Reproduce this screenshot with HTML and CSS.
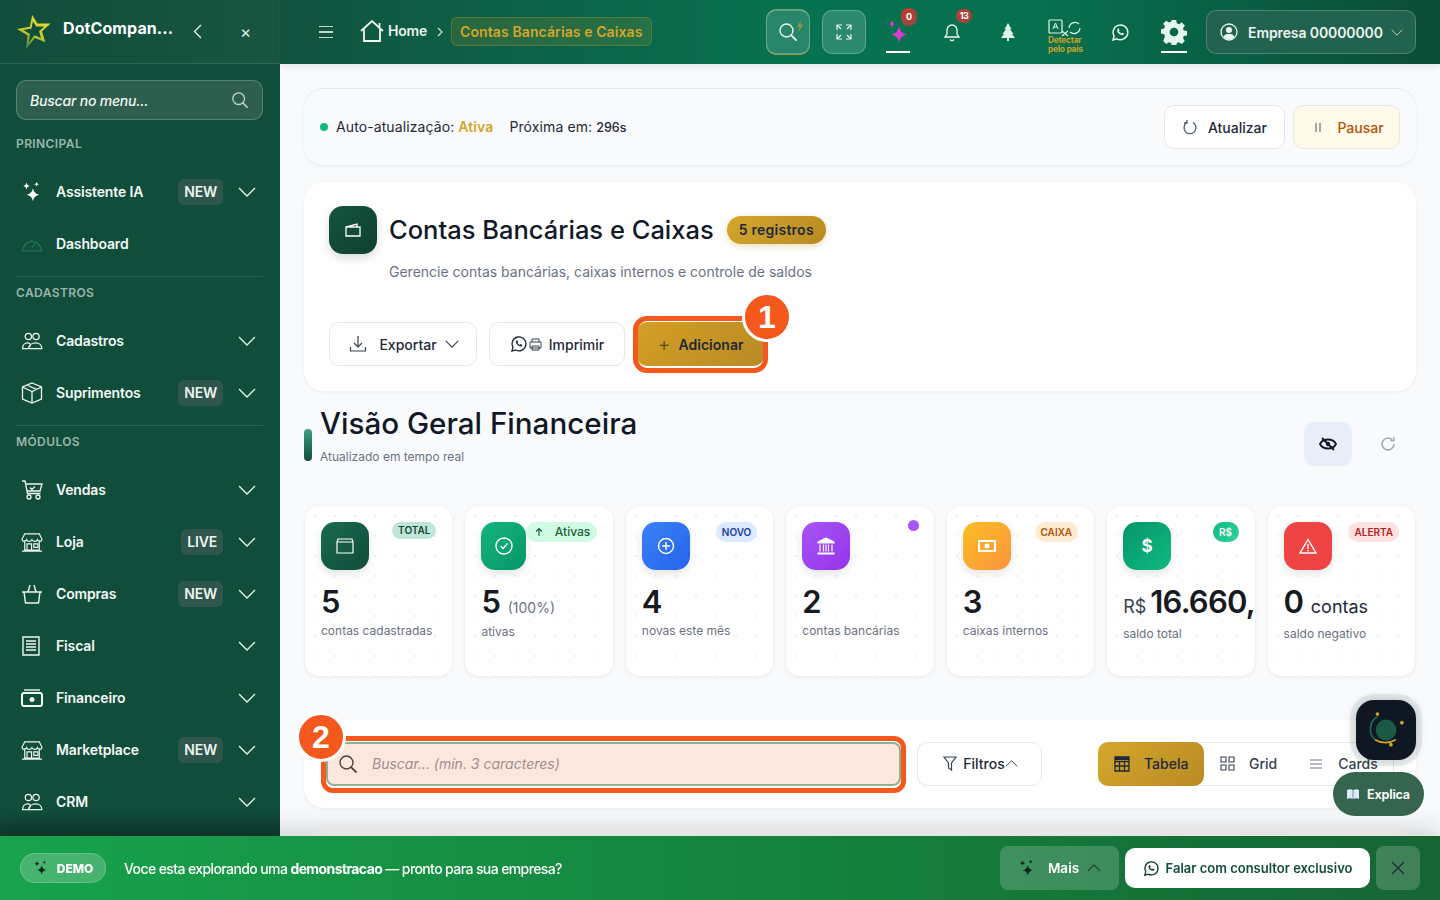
FILE: index.html
```html
<!DOCTYPE html>
<html lang="pt-BR">
<head>
    <meta charset="UTF-8">
    <meta name="viewport" content="width=device-width, initial-scale=1.0">
    <title>Contas Bancárias e Caixas</title>
    <link rel="stylesheet" href="styles.css">
</head>
<body>
    <svg class="sprite" xmlns="http://www.w3.org/2000/svg">
        <symbol id="chev" viewBox="0 0 18 10"><path d="M1 1l8 8 8-8" fill="none" stroke="currentColor" stroke-width="1.4"/></symbol>
        <symbol id="search" viewBox="0 0 20 20"><circle cx="8.5" cy="8.5" r="6.5" fill="none" stroke="currentColor" stroke-width="1.4"/><path d="M13.3 13.3L18 18" stroke="currentColor" stroke-width="1.8" stroke-linecap="round"/></symbol>
        <symbol id="spark" viewBox="0 0 24 24"><path fill="currentColor" d="M13 8q1 6 7 7-6 1-7 7-1-6-7-7 6-1 7-7zM6 2q.5 3 3.500 3.500-3 .5-3.500 3.500-.5-3-3.500-3.500 3-.5 3.500-3.500zM17 1q.3 2 2.500 2.500-2.200.5-2.500 2.500-.3-2-2.500-2.500 2.200-.5 2.500-2.500z"/></symbol>
        <symbol id="people" viewBox="0 0 24 20"><g fill="none" stroke="currentColor" stroke-width="1.400"><circle cx="8" cy="5" r="3.500"/><circle cx="16.500" cy="5" r="3.500"/><path d="M1.500 18.500c0-4 2.500-6.500 5.500-6.500 2 0 3 1 3.500 2l-2.500 4.500zM8 18.500c.5-4 4-6.500 8-6.500s7 2.500 7 6.500z"/></g></symbol>
        <symbol id="whats" viewBox="0 0 24 24"><path fill="none" stroke="currentColor" stroke-width="1.800" d="M2.500 21.500l1.400-5A9.300 9.300 0 1 1 7.500 20z"/><path fill="currentColor" d="M8.800 7.300c.4-.4 1-.4 1.200.1l.7 1.600c.1.300 0 .6-.2.800l-.5.600c.6 1.200 1.600 2.200 2.900 2.800l.7-.8c.2-.2.500-.3.800-.2l1.600.8c.4.200.5.700.2 1.200-.6.900-1.600 1.300-2.600 1.100-3-.6-5.400-3-5.800-5.900-.1-.8.300-1.500 1-2.100z"/></symbol>
        <symbol id="store" viewBox="0 0 24 22"><g fill="none" stroke="currentColor" stroke-width="1.300"><path d="M4 9v11h16V9M1 21h22M4 2h16l3 6c0 3-4 3-5 .5-.8 2.500-4.800 2.500-6 0-1.200 2.500-5.200 2.500-6 0C5 11 1 11 1 8z"/><path d="M6.500 20v-7h5v7M14 13h4.500v4H14z"/></g></symbol>
    </svg>

    <div class="app">
        <aside class="sidebar">
            <div class="side-head">
                <svg class="logo" width="37" height="38" viewBox="40 36 112 116">
                    <defs><linearGradient id="star" x1="0.7" y1="0" x2="0.3" y2="1"><stop offset="0" stop-color="#e8e22c"/><stop offset="0.55" stop-color="#c4c832"/><stop offset="1" stop-color="#2f6f44"/></linearGradient></defs>
                    <path fill="url(#star)" fill-rule="evenodd" d="M92 42L108 68 148 68 122 92 132 125 100 112 72 148 78 105 45 85 85 78ZM94 61L90 83 65 88 85 100 82 127 99 104 119 112 113 92 129 77 104 77Z"/>
                </svg>
                <span class="brand">DotCompan...</span>
                <svg class="side-back" width="9" height="15" viewBox="0 0 9 15"><path d="M8 1L1.500 7.500 8 14" fill="none" stroke="currentColor" stroke-width="1.300"/></svg>
                <span class="side-close">×</span>
            </div>
            <div class="side-body">
                <div class="side-search">
                    <span>Buscar no menu...</span>
                    <svg width="18" height="18"><use href="#search"/></svg>
                </div>

                <div class="side-label">PRINCIPAL</div>
                <a class="nav-item">
                    <svg class="nav-icon spark-icon" width="22" height="22"><use href="#spark"/></svg>
                    <span class="nav-text">Assistente IA</span>
                    <span class="tag">NEW</span>
                    <svg class="nav-chev" width="18" height="10"><use href="#chev"/></svg>
                </a>
                <a class="nav-item">
                    <svg class="nav-icon dim" width="22" height="16" viewBox="0 0 22 16"><path d="M1.500 15a9.500 9.500 0 1 1 19 0zM11 12l4-6M4 10h1M17 10h1M11 4v1" fill="none" stroke="currentColor" stroke-width="1.200"/></svg>
                    <span class="nav-text">Dashboard</span>
                </a>

                <div class="side-rule"></div>
                <div class="side-label">CADASTROS</div>
                <a class="nav-item">
                    <svg class="nav-icon" width="22" height="18"><use href="#people"/></svg>
                    <span class="nav-text">Cadastros</span>
                    <svg class="nav-chev" width="18" height="10"><use href="#chev"/></svg>
                </a>
                <a class="nav-item">
                    <svg class="nav-icon" width="22" height="22" viewBox="0 0 22 22"><path d="M11 1l9.500 4v12L11 21l-9.500-4V5zM1.500 5L11 9.500 20.500 5M11 9.500V21M6 3l9.500 4.300" fill="none" stroke="currentColor" stroke-width="1.300"/></svg>
                    <span class="nav-text">Suprimentos</span>
                    <span class="tag">NEW</span>
                    <svg class="nav-chev" width="18" height="10"><use href="#chev"/></svg>
                </a>

                <div class="side-rule"></div>
                <div class="side-label">MÓDULOS</div>
                <a class="nav-item">
                    <svg class="nav-icon" width="22" height="20" viewBox="0 0 22 20"><path d="M1 1h3l2.500 12.500h13M5 4h16l-2 7H6.300M9 7.500l2 2 3-3" fill="none" stroke="currentColor" stroke-width="1.300"/><circle cx="8" cy="17" r="2" fill="none" stroke="currentColor" stroke-width="1.300"/><circle cx="17" cy="17" r="2" fill="none" stroke="currentColor" stroke-width="1.300"/></svg>
                    <span class="nav-text">Vendas</span>
                    <svg class="nav-chev" width="18" height="10"><use href="#chev"/></svg>
                </a>
                <a class="nav-item">
                    <svg class="nav-icon" width="22" height="20"><use href="#store"/></svg>
                    <span class="nav-text">Loja</span>
                    <span class="tag">LIVE</span>
                    <svg class="nav-chev" width="18" height="10"><use href="#chev"/></svg>
                </a>
                <a class="nav-item">
                    <svg class="nav-icon" width="22" height="20" viewBox="0 0 22 20"><path d="M1 8h20M3 8l1.500 11h13L19 8M7 8l2-7M15 8l-2-7" fill="none" stroke="currentColor" stroke-width="1.400"/></svg>
                    <span class="nav-text">Compras</span>
                    <span class="tag">NEW</span>
                    <svg class="nav-chev" width="18" height="10"><use href="#chev"/></svg>
                </a>
                <a class="nav-item">
                    <svg class="nav-icon" width="20" height="20" viewBox="0 0 20 20"><path d="M2 1h16v18H2zM5 5h10M5 8h10M5 11h10M5 14h10" fill="none" stroke="currentColor" stroke-width="1.400"/></svg>
                    <span class="nav-text">Fiscal</span>
                    <svg class="nav-chev" width="18" height="10"><use href="#chev"/></svg>
                </a>
                <a class="nav-item">
                    <svg class="nav-icon" width="22" height="18" viewBox="0 0 22 18"><path d="M3 1h16" stroke="currentColor" stroke-width="1.400"/><rect x="1" y="4" width="20" height="13" rx="2" fill="none" stroke="currentColor" stroke-width="2"/><circle cx="11" cy="10.500" r="2.500" fill="currentColor"/></svg>
                    <span class="nav-text">Financeiro</span>
                    <svg class="nav-chev" width="18" height="10"><use href="#chev"/></svg>
                </a>
                <a class="nav-item">
                    <svg class="nav-icon" width="22" height="20"><use href="#store"/></svg>
                    <span class="nav-text">Marketplace</span>
                    <span class="tag">NEW</span>
                    <svg class="nav-chev" width="18" height="10"><use href="#chev"/></svg>
                </a>
                <a class="nav-item">
                    <svg class="nav-icon" width="22" height="18"><use href="#people"/></svg>
                    <span class="nav-text">CRM</span>
                    <svg class="nav-chev" width="18" height="10"><use href="#chev"/></svg>
                </a>
            </div>
        </aside>

        <div class="main">
            <header class="topbar">
                <div class="burger"><i></i><i></i><i></i></div>
                <svg class="home-icon" width="24" height="22" viewBox="0 0 24 22"><path d="M1 11L12 1l7.500 7V3M23 11l-3.500-3M4 9v12h16V9" fill="none" stroke="currentColor" stroke-width="1.800"/></svg>
                <span class="crumb-home">Home</span>
                <svg class="crumb-sep" width="6" height="10" viewBox="0 0 6 10"><path d="M1 1l4 4-4 4" fill="none" stroke="currentColor" stroke-width="1.200"/></svg>
                <span class="crumb-now">Contas Bancárias e Caixas</span>

                <div class="top-right">
                    <div class="top-btn top-btn-glow">
                        <svg width="20" height="20"><use href="#search"/></svg>
                        <svg class="bolt" width="6" height="12" viewBox="0 0 6 12"><path d="M4 0L0 7h2.500L1.500 12 6 4.500H3.500z" fill="#8f9a3c"/></svg>
                    </div>
                    <div class="top-btn">
                        <svg width="18" height="18" viewBox="0 0 18 18"><path d="M7 2H2v5M2 2l4 4M11 2h5v5M16 2l-4 4M7 16H2v-5M2 16l4-4M11 16h5v-5M16 16l-4-4" fill="none" stroke="currentColor" stroke-width="1.200"/></svg>
                    </div>
                    <div class="top-slot">
                        <svg class="magenta" width="24" height="28" viewBox="0 0 24 28"><path fill="currentColor" d="M13 10q1 7.500 8 8.500-7 1-8 8.500-1-7.500-8-8.500 7-1 8-8.500zM6 4q.5 3 3 4-2.500.5-3 4-.5-3.500-3-4 2.500-1 3-4z"/></svg>
                        <span class="count count-tall">0</span>
                        <i class="under"></i>
                    </div>
                    <div class="top-slot">
                        <svg width="18" height="20" viewBox="0 0 18 20"><path d="M2 15h14l-2-3V8A5 5 0 0 0 4 8v4zM7 17.500c.5 1.300 3.500 1.300 4 0" fill="none" stroke="currentColor" stroke-width="1.300"/></svg>
                        <span class="count count-wide">13</span>
                    </div>
                    <div class="top-slot slot-tree">
                        <svg width="14" height="18" viewBox="0 0 14 18"><path d="M7 0l3.500 6H9l3.500 5H11l3 4H8v3H6v-3H0l3-4H1.500L5 6H3.500z" fill="#e0f2ea"/></svg>
                    </div>
                    <div class="top-slot slot-lang">
                        <svg class="lang-icon" width="34" height="18" viewBox="0 0 34 18"><rect x="1" y="1" width="13" height="13" rx="1" fill="none" stroke="currentColor" stroke-width="1.200"/><path d="M5 10l2.500-6L10 10M6 8h3" fill="none" stroke="currentColor"/><path d="M21 9a6 6 0 0 1 10-4M32 9a6 6 0 0 1-10 4M14 12l6 5M20 12l-6 5" fill="none" stroke="currentColor" stroke-width="1.200"/></svg>
                        <span class="lang-text">Detectar<br>pelo pais</span>
                    </div>
                    <div class="top-slot slot-whats">
                        <svg width="19" height="19"><use href="#whats"/></svg>
                    </div>
                    <div class="top-slot">
                        <svg width="26" height="26" viewBox="0 0 24 24"><path fill="#e6f4ee" fill-rule="evenodd" d="M10 1h4l.6 3 2 .8 2.600-1.700 2.800 2.800-1.700 2.600.8 2 3 .6v4l-3 .6-.8 2 1.700 2.600-2.800 2.800-2.600-1.700-2 .8-.6 3h-4l-.6-3-2-.8-2.600 1.700-2.800-2.800L3.700 16l-.8-2-3-.6v-4l3-.6.8-2L2 4.300l2.800-2.800 2.600 1.700 2-.8zM12 8a4 4 0 1 0 0 8 4 4 0 0 0 0-8z"/></svg>
                        <i class="under under-gear"></i>
                    </div>
                    <div class="company">
                        <svg width="18" height="18" viewBox="0 0 18 18"><circle cx="9" cy="9" r="8" fill="none" stroke="currentColor" stroke-width="1.300"/><circle cx="9" cy="7" r="3" fill="currentColor"/><path d="M3.500 14c1-2.500 3-3 5.500-3s4.500.5 5.500 3c-3 3-8 3-11 0z" fill="currentColor"/></svg>
                        <span>Empresa 00000000</span>
                        <svg class="company-chev" width="12" height="7"><use href="#chev"/></svg>
                    </div>
                </div>
            </header>

            <main class="content">
                <section class="auto-bar">
                    <i class="dot"></i>
                    <span class="auto-text">Auto-atualização: <b>Ativa</b></span>
                    <span class="auto-next">Próxima em: <em>296s</em></span>
                    <div class="auto-actions">
                        <button class="btn btn-refresh">
                            <svg width="16" height="16" viewBox="0 0 16 16"><path d="M5 3.500a6 6 0 1 0 6 0M5 1v3H2" fill="none" stroke="#4b5563" stroke-width="1.300"/></svg>
                            Atualizar
                        </button>
                        <button class="btn btn-pause">
                            <svg width="6" height="9" viewBox="0 0 6 9"><path d="M1 0v9M5 0v9" stroke="#4b5563" stroke-width="1"/></svg>
                            Pausar
                        </button>
                    </div>
                </section>

                <section class="page-card">
                    <div class="title-row">
                        <div class="title-icon">
                            <svg width="16" height="14" viewBox="0 0 16 14"><path d="M1 4h14v9H1zM1 4l11-3v3" fill="none" stroke="#fff" stroke-width="1.300"/></svg>
                        </div>
                        <h1>Contas Bancárias e Caixas</h1>
                        <span class="count-pill">5 registros</span>
                    </div>
                    <p class="subtitle">Gerencie contas bancárias, caixas internos e controle de saldos</p>
                    <div class="page-actions">
                        <button class="btn btn-export">
                            <svg width="18" height="18" viewBox="0 0 18 18"><path d="M9 1v11M5 8l4 4 4-4M1.500 12v4h15v-4" fill="none" stroke="#374151" stroke-width="1.200"/></svg>
                            Exportar
                            <svg class="export-chev" width="14" height="8"><use href="#chev"/></svg>
                        </button>
                        <button class="btn btn-print">
                            <span class="print-icons">
                                <svg width="18" height="18"><use href="#whats"/></svg>
                                <svg class="print-svg" width="13" height="13" viewBox="0 0 13 13"><path d="M3 4V1h7v3M1 4h11v6H1zM3 8h7v4H3z" fill="none" stroke="#374151" stroke-width="1"/></svg>
                            </span>
                            Imprimir
                        </button>
                        <div class="add-wrap">
                            <button class="btn btn-add"><span class="plus">+</span> Adicionar</button>
                            <span class="step step-one">1</span>
                        </div>
                    </div>
                </section>

                <section class="overview">
                    <i class="overview-bar"></i>
                    <div class="overview-text">
                        <h2>Visão Geral Financeira</h2>
                        <p>Atualizado em tempo real</p>
                    </div>
                    <div class="eye-btn">
                        <svg width="18" height="14" viewBox="0 0 18 14"><path d="M1 7c3-6 13-6 16 0-3 6-13 6-16 0zM3 1l12 12" fill="none" stroke="#111827" stroke-width="1.800"/><circle cx="9" cy="7" r="2.200" fill="#111827"/></svg>
                    </div>
                    <svg class="overview-refresh" width="16" height="16" viewBox="0 0 16 16"><path d="M14 8a6 6 0 1 1-2-4.500M14 1v3.500h-3.500" fill="none" stroke="#9ca3af" stroke-width="1.400"/></svg>
                </section>

                <section class="stats">
                    <div class="stat">
                        <div class="stat-top">
                            <div class="stat-icon bg-dark">
                                <svg width="18" height="16" viewBox="0 0 18 16"><path d="M1 4h16v11H1zM1 4l1-3h14l1 3" fill="none" stroke="#fff" stroke-width="1.200"/></svg>
                            </div>
                            <span class="pill pill-total">TOTAL</span>
                        </div>
                        <div class="stat-value">5</div>
                        <div class="stat-label">contas cadastradas</div>
                    </div>
                    <div class="stat">
                        <div class="stat-top">
                            <div class="stat-icon stat-icon-shrink bg-green">
                                <svg width="18" height="18" viewBox="0 0 18 18"><circle cx="9" cy="9" r="8" fill="none" stroke="#fff" stroke-width="1.400"/><path d="M5.500 9l2.500 2.500 4.500-5" fill="none" stroke="#fff" stroke-width="1.400"/></svg>
                            </div>
                            <span class="pill pill-active">
                                <svg width="10" height="10" viewBox="0 0 10 10"><path d="M5 9V1.500M2 4.500l3-3 3 3" fill="none" stroke="currentColor" stroke-width="1.200"/></svg>
                                Ativas
                            </span>
                        </div>
                        <div class="stat-value">5 <small>(100%)</small></div>
                        <div class="stat-label label-low">ativas</div>
                    </div>
                    <div class="stat">
                        <div class="stat-top">
                            <div class="stat-icon bg-blue">
                                <svg width="18" height="18" viewBox="0 0 18 18"><circle cx="9" cy="9" r="7.500" fill="none" stroke="#fff" stroke-width="1.400"/><path d="M9 5v8M5 9h8" stroke="#fff" stroke-width="1.400"/></svg>
                            </div>
                            <span class="pill pill-new">NOVO</span>
                        </div>
                        <div class="stat-value">4</div>
                        <div class="stat-label">novas este mês</div>
                    </div>
                    <div class="stat">
                        <div class="stat-top">
                            <div class="stat-icon bg-purple">
                                <svg width="18" height="18" viewBox="0 0 18 18"><path d="M9 1l8 4v1H1V5zM1 16h16v1H1zM3 7.500v7M6.500 7.500v7M11.500 7.500v7M15 7.500v7M9 7.500v7" fill="#fff" stroke="#fff" stroke-width="1.200"/></svg>
                            </div>
                            <i class="purple-dot"></i>
                        </div>
                        <div class="stat-value">2</div>
                        <div class="stat-label">contas bancárias</div>
                    </div>
                    <div class="stat">
                        <div class="stat-top">
                            <div class="stat-icon bg-orange">
                                <svg width="18" height="12" viewBox="0 0 18 12"><rect x="1" y="1" width="16" height="10" fill="none" stroke="#fff" stroke-width="2"/><circle cx="9" cy="6" r="2.500" fill="#fff"/></svg>
                            </div>
                            <span class="pill pill-cash">CAIXA</span>
                        </div>
                        <div class="stat-value">3</div>
                        <div class="stat-label">caixas internos</div>
                    </div>
                    <div class="stat">
                        <div class="stat-top">
                            <div class="stat-icon bg-money"><span>$</span></div>
                            <span class="pill pill-money">R$</span>
                        </div>
                        <div class="stat-value stat-money"><small class="currency">R$</small>16.660,</div>
                        <div class="stat-label label-lower">saldo total</div>
                    </div>
                    <div class="stat">
                        <div class="stat-top">
                            <div class="stat-icon bg-red">
                                <svg width="18" height="16" viewBox="0 0 18 16"><path d="M9 1.500L17 15H1zM9 6v5M9 12v1.500" fill="none" stroke="#fff" stroke-width="1.400"/></svg>
                            </div>
                            <span class="pill pill-alert">ALERTA</span>
                        </div>
                        <div class="stat-value">0 <small class="unit">contas</small></div>
                        <div class="stat-label label-lower">saldo negativo</div>
                    </div>
                </section>

                <section class="filter-bar">
                    <div class="search-wrap">
                        <div class="search-box">
                            <svg width="20" height="20"><use href="#search"/></svg>
                            <span>Buscar... (mín. 3 caracteres)</span>
                        </div>
                        <span class="step step-two">2</span>
                    </div>
                    <button class="btn btn-filter">
                        <svg width="14" height="15" viewBox="0 0 14 15"><path d="M1 1h12L8.500 7v7l-3-2V7z" fill="none" stroke="#374151" stroke-width="1.200"/></svg>
                        Filtros<svg width="13" height="7" class="up"><use href="#chev"/></svg>
                    </button>
                    <div class="view-toggle">
                        <span class="view view-on">
                            <svg width="16" height="16" viewBox="0 0 16 16"><path d="M1 1h14v14H1zM1 5.500h14M1 10h14M5.500 5.500V15M10.500 5.500V15" fill="none" stroke="#1f2937" stroke-width="1.300"/><path d="M1 1h14v3H1z" fill="#1f2937"/></svg>
                            Tabela
                        </span>
                        <span class="view">
                            <svg width="15" height="15" viewBox="0 0 15 15"><path d="M1 1h5v5H1zM9 1h5v5H9zM1 9h5v5H1zM9 9h5v5H9z" fill="none" stroke="#374151" stroke-width="1.100"/></svg>
                            Grid
                        </span>
                        <span class="view view-cards">
                            <svg width="12" height="10" viewBox="0 0 12 10"><path d="M0 1h12M0 5h12M0 9h12" stroke="#9ca3af" stroke-width="1.400"/></svg>
                            Cards
                        </span>
                    </div>
                </section>
                <div class="next-card"></div>
            </main>
        </div>
    </div>

    <div class="float-app">
        <svg width="44" height="44" viewBox="0 0 36 36">
            <circle cx="18" cy="18" r="8.500" fill="#1a5a44"/>
            <path d="M9 26A12 12 0 0 1 11 7" fill="none" stroke="#1a6a50" stroke-width="1.400"/>
            <path d="M9 26c5 3 12 3 17 0" fill="none" stroke="#d4a528" stroke-width="1.400"/>
            <circle cx="11" cy="5" r="1.500" fill="#d4a528"/><circle cx="31" cy="12" r="1.500" fill="#d4a528"/><circle cx="22" cy="30" r="1.500" fill="#d4a528"/>
        </svg>
    </div>
    <button class="float-explain">
        <svg width="12" height="10" viewBox="0 0 12 10"><path d="M0 1c2-1 4-1 5.700 0v9C4 9 2 9 0 10zM12 1c-2-1-4-1-5.700 0v9c1.700-1 3.700-1 5.700 0z" fill="#dbeafe"/></svg>
        Explica
    </button>

    <div class="demo-bar">
        <span class="demo-tag">
            <svg width="16" height="16"><use href="#spark"/></svg>
            DEMO
        </span>
        <span class="demo-text">Voce esta explorando uma <b>demonstracao</b> — pronto para sua empresa?</span>
        <div class="demo-actions">
            <button class="demo-more">
                <svg width="18" height="18"><use href="#spark"/></svg>
                Mais
                <svg class="up" width="14" height="8"><use href="#chev"/></svg>
            </button>
            <button class="demo-call">
                <svg width="17" height="17"><use href="#whats"/></svg>
                Falar com consultor exclusivo
            </button>
            <button class="demo-close">
                <svg width="14" height="14" viewBox="0 0 14 14"><path d="M1 1l12 12M13 1L1 13" stroke="#1f2937" stroke-width="1.100"/></svg>
            </button>
        </div>
    </div>
</body>
</html>
```

FILE: styles.css
```css
* {
    box-sizing: border-box;
    margin: 0;
    padding: 0;
    font-family: Inter, "Liberation Sans", sans-serif;
}

body {
    height: 100vh;
    overflow: hidden;
    background-color: #f8fafc;
    color: #111827;
}

.sprite {
    display: none;
}

button {
    border: none;
    cursor: pointer;
    background: none;
}

.app {
    display: flex;
    height: 900px;
}

/* sidebar */
.sidebar {
    width: 280px;
    flex-shrink: 0;
    background-color: #114d3b;
    color: #fff;
    position: relative;
}

.sidebar::after {
    content: "";
    position: absolute;
    left: 0;
    right: 0;
    bottom: 64px;
    height: 24px;
    background: linear-gradient(rgba(13, 55, 42, 0), #10392e);
}

.side-head {
    height: 64px;
    display: flex;
    align-items: center;
    padding-left: 15px;
    border-bottom: 1px solid rgba(255, 255, 255, 0.12);
    border-right: 1px solid rgba(255, 255, 255, 0.06);
    background: linear-gradient(90deg, #114d3b, #17563f);
}

.logo {
    flex-shrink: 0;
}

.brand {
    margin-left: 11px;
    width: 120px;
    font-size: 16px;
    font-weight: 700;
    letter-spacing: 0.1px;
    margin-top: -8px;
}

.side-back {
    margin-left: 10px;
    color: #e5efe9;
}

.side-close {
    margin-left: 38px;
    font-size: 17px;
    color: #e5efe9;
}

.side-body {
    padding: 16px 17px 0 16px;
}

.side-search {
    height: 40px;
    display: flex;
    align-items: center;
    justify-content: space-between;
    padding: 0 13px;
    border-radius: 10px;
    background-color: #2d5e4e;
    border: 1px solid rgba(255, 255, 255, 0.22);
    font-size: 14px;
    font-style: italic;
    font-weight: 500;
    letter-spacing: -0.2px;
    color: #f1f5f3;
}

.side-search svg {
    color: #c4d4cd;
}

.side-label {
    margin-top: 17px;
    margin-bottom: 15px;
    height: 14px;
    line-height: 14px;
    font-size: 12px;
    font-weight: 600;
    letter-spacing: 0.4px;
    color: #9bb5ab;
}

.side-rule + .side-label {
    margin-top: 9px;
}

.side-rule {
    height: 1px;
    margin-top: 6px;
    background-color: rgba(255, 255, 255, 0.12);
}

.nav-item {
    height: 52px;
    display: flex;
    align-items: center;
    padding-right: 7px;
    position: relative;
}

.nav-icon {
    position: absolute;
    left: 5px;
    top: 50%;
    transform: translateY(-50%);
    color: #eef5f1;
}

.spark-icon {
    color: #fff;
}

.nav-icon.dim {
    color: #1f7a5c;
}

.nav-text {
    margin-left: 40px;
    margin-top: -2px;
    font-size: 14px;
    font-weight: 600;
    letter-spacing: -0.15px;
    color: #f3f7f5;
}

.tag {
    margin-left: auto;
    height: 26px;
    line-height: 26px;
    padding: 0 6px;
    border-radius: 6px;
    font-size: 14px;
    font-weight: 600;
    letter-spacing: -0.2px;
    background-color: #2f564c;
    color: #edf3f0;
}

.nav-chev {
    margin-left: 15px;
    color: #e5efe9;
}

.tag + .nav-chev {
    margin-left: 15px;
}

.nav-text + .nav-chev {
    margin-left: auto;
}

/* top bar */
.main {
    flex: 1;
    min-width: 0;
    display: flex;
    flex-direction: column;
}

.topbar {
    height: 64px;
    display: flex;
    align-items: center;
    padding-left: 39px;
    color: #fff;
    background: linear-gradient(90deg, #11533f, #07724f 45%, #07714f 65%, #0b4c37);
    box-shadow: 0 2px 8px rgba(0, 0, 0, 0.1);
    position: relative;
    z-index: 2;
}

.burger {
    width: 14px;
    display: flex;
    flex-direction: column;
    gap: 4px;
}

.burger i {
    height: 1.500px;
    background-color: #c2d8cf;
}

.home-icon {
    margin-left: 27px;
    margin-top: -2px;
    color: #f1f5f3;
}

.crumb-home {
    margin-left: 4px;
    margin-top: -4px;
    font-size: 14px;
    font-weight: 600;
    letter-spacing: -0.2px;
    color: #e8f1ed;
}

.crumb-sep {
    margin-left: 10px;
    color: #cfe0d9;
}

.crumb-now {
    margin-left: 8px;
    margin-top: -2px;
    height: 29px;
    line-height: 27px;
    padding: 0 8px;
    font-size: 14px;
    font-weight: 600;
    letter-spacing: 0.1px;
    color: #d4a528;
    background-color: rgba(212, 165, 40, 0.14);
    border: 1px solid rgba(212, 165, 40, 0.25);
    border-radius: 6px;
}

.top-right {
    margin-left: auto;
    margin-right: 24px;
    display: flex;
    align-items: center;
    gap: 10px;
}

.top-btn {
    width: 44px;
    height: 44px;
    display: flex;
    align-items: center;
    justify-content: center;
    border-radius: 10px;
    background-color: #2b8a6d;
    border: 1px solid rgba(255, 255, 255, 0.25);
    color: #e9f4ef;
    position: relative;
}

.top-btn + .top-btn {
    margin-left: 2px;
}

.top-btn-glow {
    background-color: #28876a;
    box-shadow: 0 -1px 0 #7ea36e, 0 1px 0 #9b9c3e;
}

.bolt {
    position: absolute;
    top: 9px;
    right: 6px;
}

.top-slot {
    width: 44px;
    height: 44px;
    display: flex;
    align-items: center;
    justify-content: center;
    position: relative;
    color: #f1f7f4;
}

.slot-tree {
    margin-left: 2px;
}

.slot-lang {
    margin-left: 3px;
}

.slot-whats {
    margin-left: 1px;
}

.magenta {
    color: #d63ad6;
    margin-top: -5px;
}

.under {
    position: absolute;
    left: 10px;
    right: 10px;
    bottom: 1px;
    height: 2px;
    background-color: #fff;
}

.under-gear {
    left: 9px;
    right: 9px;
}

.count {
    position: absolute;
    font-size: 9px;
    font-weight: 700;
    color: #fff;
    background: linear-gradient(135deg, #c93a34, #8f4a40);
    text-align: center;
    border-radius: 9px;
}

.count-tall {
    top: -2px;
    right: 3px;
    width: 16px;
    height: 18px;
    line-height: 18px;
}

.count-wide {
    top: -1px;
    right: 2px;
    width: 16px;
    height: 14px;
    line-height: 14px;
    letter-spacing: -0.5px;
}

.lang-icon {
    color: #e6f2ec;
    margin-top: -8px;
}

.lang-text {
    position: absolute;
    top: 26px;
    left: 5px;
    font-size: 8.500px;
    line-height: 8.500px;
    font-weight: 700;
    letter-spacing: -0.3px;
    color: #c9a227;
}

.company {
    width: 210px;
    height: 44px;
    display: flex;
    align-items: center;
    padding-left: 13px;
    border-radius: 10px;
    background-color: #226350;
    border: 1px solid rgba(255, 255, 255, 0.2);
    font-size: 14px;
    font-weight: 600;
    letter-spacing: -0.1px;
    color: #eef5f1;
}

.company span {
    margin-left: 10px;
}

.company-chev {
    margin-left: 8px;
    color: #c5d8d0;
}

/* content */
.content {
    flex: 1;
    padding: 24px 24px 0;
    background-color: #f8fafc;
}

.auto-bar {
    height: 77px;
    display: flex;
    align-items: center;
    padding: 0 16px;
    border-radius: 20px;
    background-color: #f9fafc;
    border-top: 1px solid #e5e7eb;
    box-shadow: 0 2px 4px rgba(0, 0, 0, 0.05);
    font-size: 14px;
    letter-spacing: 0.1px;
    color: #1f2937;
}

.dot {
    width: 8px;
    height: 8px;
    border-radius: 50%;
    background-color: #10b981;
}

.auto-text {
    margin-left: 8px;
    margin-top: -2px;
}

.auto-text b {
    color: #d4a528;
    font-weight: 600;
}

.auto-next {
    margin-left: 16px;
    margin-top: -2px;
}

.auto-next em {
    font-style: normal;
    font-weight: 500;
    font-size: 12.500px;
    letter-spacing: 0;
}

.auto-actions {
    margin-left: auto;
    display: flex;
    gap: 8px;
}

.btn {
    height: 44px;
    display: flex;
    align-items: center;
    justify-content: center;
    background-color: #fff;
    border: 1px solid #e5e7eb;
    border-radius: 10px;
    font-size: 14px;
    font-weight: 500;
    color: #1f2937;
}

.btn-refresh {
    width: 121px;
    gap: 10px;
}

.btn-pause {
    width: 107px;
    gap: 16px;
    padding-left: 6px;
    background-color: #fef9e8;
    color: #b45309;
}

.page-card {
    height: 209px;
    margin-top: 17px;
    padding: 24px 25px;
    background-color: #fff;
    border-radius: 20px;
    box-shadow: 0 1px 4px rgba(0, 0, 0, 0.05);
}

.title-row {
    display: flex;
    align-items: center;
}

.title-icon {
    width: 48px;
    height: 48px;
    display: flex;
    align-items: center;
    justify-content: center;
    border-radius: 14px;
    background: linear-gradient(135deg, #14553f, #0e3f30);
    box-shadow: 0 4px 10px rgba(0, 0, 0, 0.15);
}

h1 {
    margin-left: 12px;
    margin-top: -2px;
    font-size: 25.500px;
    font-weight: 500;
    color: #111827;
}

.count-pill {
    margin-left: 13px;
    height: 28px;
    line-height: 28px;
    padding: 0 12px;
    border-radius: 14px;
    font-size: 14px;
    font-weight: 600;
    letter-spacing: 0.25px;
    color: #1f2937;
    background: linear-gradient(135deg, #d4a72c, #b88a24);
    box-shadow: 0 2px 6px rgba(184, 138, 36, 0.3);
}

.subtitle {
    margin-left: 60px;
    margin-top: 9px;
    font-size: 14px;
    line-height: 18px;
    color: #6b7280;
}

.page-actions {
    margin-top: 41px;
    display: flex;
    gap: 12px;
}

.btn-export {
    width: 148px;
    gap: 12px;
    padding-left: 2px;
}

.export-chev {
    margin-left: -4px;
    color: #374151;
}

.btn-print {
    width: 136px;
    gap: 7px;
}

.print-icons {
    display: flex;
    align-items: center;
}

.print-svg {
    margin-left: 1px;
}

.add-wrap {
    position: relative;
}

.add-wrap::after {
    content: "";
    position: absolute;
    top: -6px;
    right: -4px;
    bottom: -7px;
    left: -4px;
    border: 5px solid #f4581c;
    border-radius: 14px;
}

.btn-add {
    width: 127px;
    gap: 8px;
    border: none;
    background: linear-gradient(135deg, #d49f24, #b98a26);
    color: #1f2937;
    font-weight: 600;
}

.plus {
    font-size: 20px;
    font-weight: 300;
    line-height: 1;
    color: #4b4a2a;
}

.step {
    position: absolute;
    width: 50px;
    height: 50px;
    display: flex;
    align-items: center;
    justify-content: center;
    border-radius: 50%;
    background-color: #f4581c;
    border: 3px solid #fff;
    color: #fff;
    font-size: 32px;
    font-weight: 700;
    font-family: "Liberation Sans", sans-serif;
    z-index: 3;
}

.step-one {
    top: -30px;
    left: 105px;
}

.step-two {
    top: -30px;
    left: -30px;
}

.overview {
    margin-top: 15px;
    height: 60px;
    display: flex;
    align-items: center;
    position: relative;
}

.overview-bar {
    width: 8px;
    height: 32px;
    margin-top: 17px;
    border-radius: 4px;
    background: linear-gradient(#3f9d80, #0f4c3a);
}

.overview-text {
    margin-left: 8px;
    margin-top: -2px;
}

h2 {
    font-size: 29.600px;
    line-height: 34px;
    font-weight: 500;
    color: #111827;
}

.overview-text p {
    margin-top: 9px;
    font-size: 12px;
    line-height: 16px;
    color: #6b7280;
}

.eye-btn {
    margin-left: auto;
    margin-top: 16px;
    width: 48px;
    height: 44px;
    display: flex;
    align-items: center;
    justify-content: center;
    border-radius: 10px;
    background-color: #e8eef7;
}

.overview-refresh {
    margin-left: 28px;
    margin-right: 20px;
    margin-top: 16px;
}

/* cards */
.stats {
    margin: 40px 1px 0;
    display: grid;
    grid-template-columns: repeat(7, 1fr);
    gap: 13px;
}

.stat {
    height: 170px;
    padding: 16px;
    overflow: hidden;
    border-radius: 14px;
    background-color: #fff;
    background-image: radial-gradient(#eceff3 1px, transparent 1.500px);
    background-size: 20px 20px;
    box-shadow: 0 1px 4px rgba(0, 0, 0, 0.07);
    position: relative;
}

.stat-top {
    height: 48px;
    display: flex;
    justify-content: space-between;
    align-items: flex-start;
}

.stat-icon {
    width: 48px;
    height: 48px;
    flex-shrink: 0;
    display: flex;
    align-items: center;
    justify-content: center;
    border-radius: 14px;
    box-shadow: 0 4px 8px rgba(0, 0, 0, 0.1);
    color: #fff;
    font-size: 17px;
    font-weight: 700;
}

.stat-icon-shrink {
    flex-shrink: 1;
}

.bg-dark { background: linear-gradient(135deg, #1a6a50, #0f4c3a); }
.bg-green { background: linear-gradient(135deg, #15b47d, #059669); }
.bg-blue { background: linear-gradient(135deg, #3b82f6, #2563eb); }
.bg-purple { background: linear-gradient(135deg, #a855f7, #9333ea); }
.bg-orange { background: linear-gradient(135deg, #fbbf24, #fb923c); }
.bg-money { background: linear-gradient(135deg, #059669, #10b981); }
.bg-red { background: #ef4444; }

.pill {
    height: 19px;
    line-height: 19px;
    padding: 0 6px;
    border-radius: 10px;
    font-size: 10px;
    font-weight: 600;
    white-space: nowrap;
}

.pill-total {
    height: 17px;
    line-height: 17px;
    color: #0f4c3a;
    background-color: #c2e5da;
}

.pill-active {
    height: 20px;
    line-height: 20px;
    width: 71px;
    flex-shrink: 0;
    display: flex;
    align-items: center;
    gap: 11px;
    padding: 0 0 0 8px;
    font-size: 12px;
    font-weight: 500;
    color: #166534;
    background-color: #d1fae5;
}

.pill-new {
    height: 20px;
    line-height: 20px;
    color: #1e40af;
    background-color: #dbeafe;
}

.purple-dot {
    width: 11px;
    height: 11px;
    margin-top: -2px;
    margin-right: -1px;
    border-radius: 50%;
    background-color: #a855f7;
}

.pill-cash {
    height: 20px;
    line-height: 20px;
    color: #b45309;
    background-color: #fdecd2;
}

.pill-money {
    height: 20px;
    line-height: 20px;
    width: 26px;
    padding: 0;
    text-align: center;
    color: #fff;
    background: linear-gradient(135deg, #10b981, #34d399);
}

.pill-alert {
    height: 20px;
    line-height: 20px;
    color: #b91c1c;
    background-color: #fee2e2;
}

.stat-value {
    margin-top: 13px;
    height: 38px;
    line-height: 38px;
    font-size: 31px;
    font-weight: 600;
    color: #171a20;
    white-space: nowrap;
}

.stat-money {
    letter-spacing: -0.8px;
}

.stat-value small {
    margin-left: -1px;
    font-size: 14px;
    font-weight: 400;
    color: #6b7280;
}

.stat-value .currency {
    margin-left: 0;
    margin-right: 4px;
    font-size: 18px;
    letter-spacing: 0;
    color: #374151;
}

.stat-value .unit {
    margin-left: -1px;
    font-size: 18px;
    color: #1f2937;
}

.stat-label {
    margin-top: 2px;
    font-size: 12px;
    line-height: 16px;
    white-space: nowrap;
    color: #6b7280;
}

.label-low {
    margin-top: 3px;
}

.label-lower {
    margin-top: 5px;
}

/* search and filters */
.filter-bar {
    margin-top: 44px;
    height: 88px;
    display: flex;
    align-items: center;
    padding: 0 22px;
    background-color: #fff;
    border-radius: 0 0 20px 20px;
    box-shadow: 0 1px 3px rgba(0, 0, 0, 0.06);
}

.search-wrap {
    width: 575px;
    flex-shrink: 0;
    position: relative;
}

.search-wrap::after {
    content: "";
    position: absolute;
    top: -6px;
    right: -5px;
    bottom: -7px;
    left: -5px;
    border: 5px solid #f4581c;
    border-radius: 12px;
}

.search-box {
    height: 44px;
    display: flex;
    align-items: center;
    gap: 14px;
    padding-left: 10px;
    padding-bottom: 1px;
    border: 2px solid #8bb199;
    border-radius: 8px;
    background-color: #fde6dd;
    font-size: 14px;
    font-style: italic;
    color: #a08d8d;
}

.search-box svg {
    color: #4b4242;
}

.btn-filter {
    margin-left: 16px;
    width: 125px;
    gap: 6px;
    padding-left: 2px;
    padding-bottom: 1px;
}

.btn-filter .up {
    transform: rotate(180deg);
    margin-left: -6px;
    color: #374151;
}

.view-toggle {
    margin-left: 56px;
    width: 296px;
    height: 44px;
    display: flex;
    align-items: center;
    border-radius: 10px;
    border: 1px solid #e5e7eb;
    font-size: 14px;
    font-weight: 500;
    color: #374151;
}

.view {
    display: flex;
    align-items: center;
    gap: 14px;
    height: 44px;
    padding-bottom: 1px;
}

.view-on {
    width: 106px;
    margin-left: -1px;
    padding-left: 16px;
    gap: 14px;
    border-radius: 10px;
    color: #1f2937;
    background: linear-gradient(135deg, #d4a72c, #b88a24);
}

.view:nth-child(2) {
    margin-left: 16px;
}

.view-cards {
    margin-left: 33px;
    gap: 16px;
}

.next-card {
    height: 60px;
    margin-top: 23px;
    border-radius: 20px;
    background-color: #fff;
}

/* floating stuff */
.float-app {
    position: fixed;
    left: 1356px;
    top: 700px;
    width: 60px;
    height: 60px;
    display: flex;
    align-items: center;
    justify-content: center;
    border-radius: 18px;
    background-color: #0f1722;
    box-shadow: 0 0 0 6px rgba(15, 76, 58, 0.08), 0 0 12px rgba(0, 0, 0, 0.2);
    z-index: 5;
}

.float-explain {
    position: fixed;
    left: 1333px;
    top: 772px;
    width: 91px;
    height: 44px;
    display: flex;
    align-items: center;
    justify-content: center;
    gap: 8px;
    border-radius: 22px;
    background-color: #35654f;
    color: #f4f8f6;
    font-size: 12.500px;
    font-weight: 700;
    letter-spacing: -0.2px;
    z-index: 5;
}

.demo-bar {
    position: fixed;
    left: 0;
    right: 0;
    bottom: 0;
    height: 64px;
    display: flex;
    align-items: center;
    padding: 0 20px;
    background: linear-gradient(90deg, #18a34c, #147c3c 65%, #166534);
    box-shadow: 0 -8px 24px rgba(0, 0, 0, 0.15);
    color: #fff;
    z-index: 4;
}

.demo-tag {
    width: 86px;
    height: 30px;
    display: flex;
    align-items: center;
    justify-content: center;
    gap: 8px;
    border-radius: 15px;
    background-color: rgba(255, 255, 255, 0.2);
    border: 1px solid rgba(255, 255, 255, 0.2);
    font-size: 12px;
    font-weight: 800;
}

.demo-tag svg,
.demo-more svg:first-child {
    color: #12261c;
}

.demo-text {
    margin-left: 18px;
    font-size: 14px;
    font-weight: 500;
    letter-spacing: -0.6px;
}

.demo-text b {
    font-weight: 700;
}

.demo-actions {
    margin-left: auto;
    display: flex;
    align-items: center;
    gap: 6px;
}

.demo-more {
    width: 119px;
    height: 44px;
    display: flex;
    align-items: center;
    justify-content: center;
    gap: 12px;
    border-radius: 8px;
    background-color: rgba(255, 255, 255, 0.18);
    color: #fff;
    font-size: 13.500px;
    font-weight: 600;
}

.demo-more .up {
    margin-left: -4px;
    transform: rotate(180deg);
    color: #1f3d2e;
}

.demo-call {
    width: 245px;
    height: 40px;
    display: flex;
    align-items: center;
    justify-content: center;
    gap: 6px;
    border-radius: 10px;
    background-color: #fff;
    color: #114d3b;
    font-size: 13px;
    font-weight: 600;
}

.demo-call svg {
    color: #123c2e;
}

.demo-close {
    width: 44px;
    height: 44px;
    display: flex;
    align-items: center;
    justify-content: center;
    border-radius: 8px;
    background-color: rgba(255, 255, 255, 0.18);
}
```
